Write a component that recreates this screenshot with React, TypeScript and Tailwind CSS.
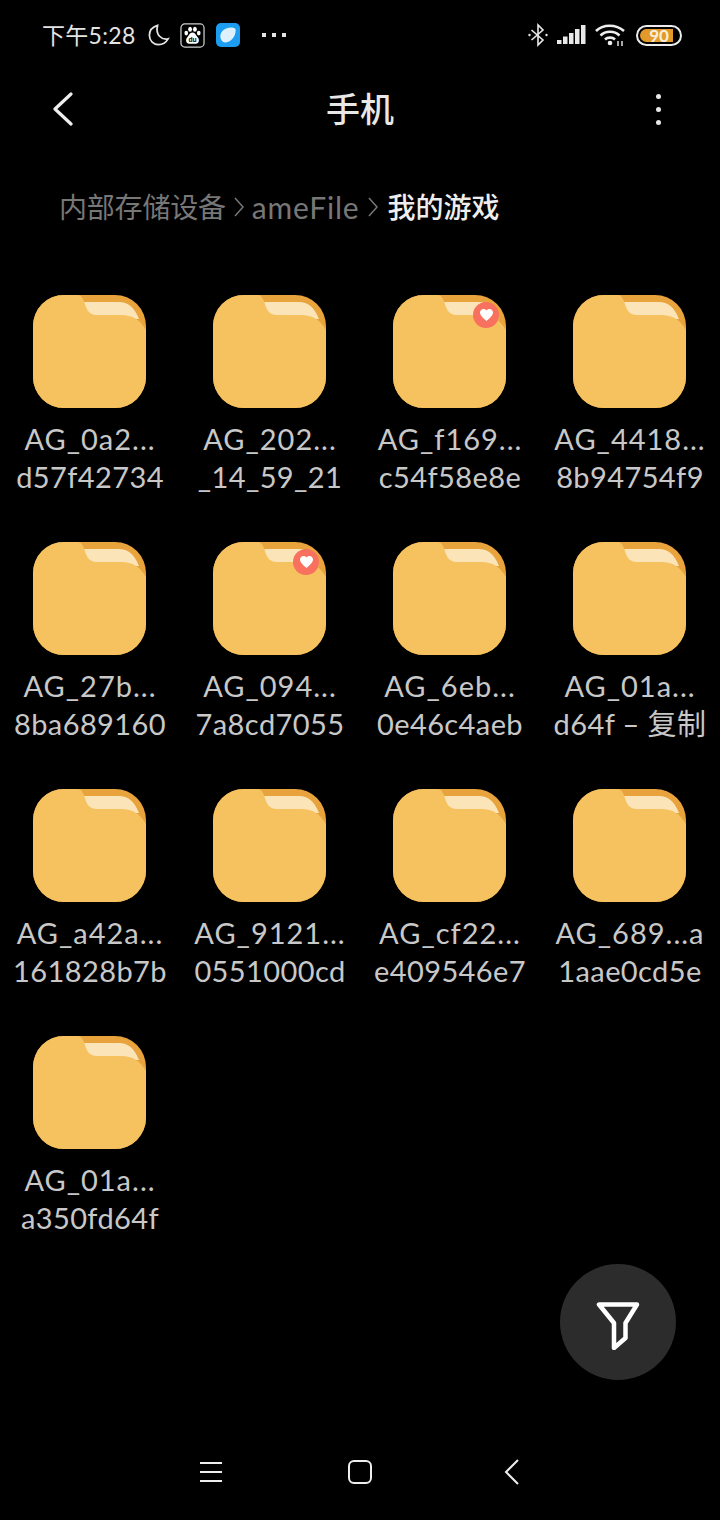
const FONT = "font-['Lato','Noto_Sans_CJK_SC',sans-serif]";

type Item = { top: string; bottom: string; liked?: boolean };

const items: Item[] = [
  { top: "AG_0a2...", bottom: "d57f42734" },
  { top: "AG_202...", bottom: "_14_59_21" },
  { top: "AG_f169...", bottom: "c54f58e8e", liked: true },
  { top: "AG_4418...", bottom: "8b94754f9" },
  { top: "AG_27b...", bottom: "8ba689160" },
  { top: "AG_094...", bottom: "7a8cd7055", liked: true },
  { top: "AG_6eb...", bottom: "0e46c4aeb" },
  { top: "AG_01a...", bottom: "d64f – 复制" },
  { top: "AG_a42a...", bottom: "161828b7b" },
  { top: "AG_9121...", bottom: "0551000cd" },
  { top: "AG_cf22...", bottom: "e409546e7" },
  { top: "AG_689...a", bottom: "1aae0cd5e" },
  { top: "AG_01a...", bottom: "a350fd64f" },
];

function FolderIcon({ liked, id }: { liked?: boolean; id: number }) {
  return (
    <div className="relative w-[113px] h-[113px] self-start ml-[33px]">
      <svg width="113" height="113" viewBox="0 0 113 113">
        <defs>
          <clipPath id={`folder-${id}`}>
            <rect width="113" height="113" rx="31" />
          </clipPath>
        </defs>
        <g clipPath={`url(#folder-${id})`}>
          <rect width="113" height="113" fill="#E8A33D" />
          <path d="M44 7H86C95 7 101 12 106 24H44Z" fill="#FBE4B8" />
          <path
            d="M0 0H44C48 0 49 2 51 6C53 13 55 20 64 20H88C100 20 107 25 113 35V113H0Z"
            fill="#F5C25F"
          />
        </g>
      </svg>
      {liked && (
        <div className="absolute right-[7px] top-[7px] w-[26px] h-[26px] rounded-full bg-[#F8705E] flex items-center justify-center">
          <svg width="13" height="12" viewBox="0 0 24 22" fill="#ffffff">
            <path d="M12 22C5 16 0 12 0 6.500C0 2.800 2.800 0 6.500 0C8.700 0 10.800 1 12 2.800C13.200 1 15.300 0 17.500 0C21.200 0 24 2.800 24 6.500C24 12 19 16 12 22Z" />
          </svg>
        </div>
      )}
    </div>
  );
}

function StatusBar() {
  return (
    <div className="h-[70px] pl-[42px] pr-[38px] flex items-center justify-between">
      <div className="flex items-center">
        <span className="text-[23px] leading-none tracking-[0.3px] text-[#e4e4e4] w-[105px] whitespace-nowrap">下午5:28</span>
        <svg width="23" height="24" viewBox="0 0 24 24" fill="none" stroke="#e4e4e4" strokeWidth="1.800">
          <path d="M11 2C6 3.500 2.500 7.500 2.500 12.500C2.500 18 7 22 12 22C16.500 22 20 19.500 22 16C15.500 17.500 8.500 12 11 2Z" />
        </svg>
        <svg className="ml-[10px]" width="25" height="25" viewBox="0 0 26 26">
          <rect x="1" y="1" width="24" height="24" rx="4" fill="none" stroke="#cfcfcf" strokeWidth="1.300" />
          <ellipse cx="6.500" cy="10.500" rx="1.900" ry="2.500" fill="#fff" />
          <ellipse cx="10.500" cy="6.500" rx="2" ry="2.600" fill="#fff" />
          <ellipse cx="15.500" cy="6.500" rx="2" ry="2.600" fill="#fff" />
          <ellipse cx="19.500" cy="10.500" rx="1.900" ry="2.500" fill="#fff" />
          <path d="M13 10C10 10 9.500 13 7.500 15C5.500 17 6 21.500 9.500 21.500H16.500C20 21.500 20.500 17 18.500 15C16.500 13 16 10 13 10Z" fill="#fff" />
          <text x="13" y="20" textAnchor="middle" fontSize="7" fontWeight="700" fontFamily="Liberation Sans" fill="#000">du</text>
        </svg>
        <div className="ml-[11px] w-[24px] h-[24px] rounded-[5px] bg-[#1C9DF2] flex items-center justify-center">
          <svg width="20" height="20" viewBox="0 0 20 20">
            <path d="M2.500 13C1.500 8 5.500 3 12 2.500C14.500 2.300 16.500 2.800 17.500 4C18.500 10 14 17 7.500 17.500C5 17.500 3 15.500 2.500 13Z" fill="#DDF0FC" />
          </svg>
        </div>
        <div className="ml-[22px] flex gap-[6px]">
          <span className="w-[4px] h-[4px] bg-[#e4e4e4]" />
          <span className="w-[4px] h-[4px] bg-[#e4e4e4]" />
          <span className="w-[4px] h-[4px] bg-[#e4e4e4]" />
        </div>
      </div>
      <div className="flex items-center">
        <svg width="20" height="24" viewBox="0 0 20 24" fill="none" stroke="#e8e8e8" strokeWidth="1.600">
          <path d="M3.500 7L15 17L10 22V2L15 7L3.500 17" />
          <circle cx="1.500" cy="12" r="1.200" fill="#e8e8e8" stroke="none" />
          <circle cx="18.500" cy="12" r="1.200" fill="#e8e8e8" stroke="none" />
        </svg>
        <svg className="ml-[9px]" width="29" height="20" viewBox="0 0 29 20" fill="#e8e8e8">
          <rect x="0" y="15" width="4.500" height="4" />
          <rect x="6" y="11.500" width="4.500" height="7.500" />
          <rect x="12" y="8" width="4.500" height="11" />
          <rect x="18" y="4" width="4.500" height="15" />
          <rect x="24" y="0" width="4.500" height="19" />
        </svg>
        <svg className="ml-[9px]" width="31" height="24" viewBox="0 0 31 24" fill="none" stroke="#eeeeee" strokeWidth="2.600">
          <path d="M1 8C8 1 21 1 29 8" />
          <path d="M5.500 12.500C10.500 7.500 19.500 7.500 24.500 12.500" />
          <path d="M10 16.500C12.500 14 17.500 14 20 16.500" />
          <circle cx="15" cy="20" r="2.300" fill="#eeeeee" stroke="none" />
          <path d="M23 18V23M27 23V18" strokeWidth="1.400" />
        </svg>
        <div className="ml-[10px] w-[46px] h-[21px] rounded-full border-[2.5px] border-[#ececec] p-[2px] relative">
          <div className="w-[88%] h-full rounded-l-full rounded-r-[5px] bg-[#E39A2B]" />
          <span className="absolute inset-0 flex items-center justify-center text-[17px] leading-none font-bold text-[#f6efdc]">90</span>
        </div>
      </div>
    </div>
  );
}

export default function App() {
  return (
    <div className={`relative w-[720px] h-[1520px] bg-black flex flex-col ${FONT}`}>
      <StatusBar />

      <div className="h-[78px] px-[52px] grid grid-cols-[1fr_auto_1fr] items-center">
        <svg className="justify-self-start" width="22" height="34" viewBox="0 0 22 34" fill="none" stroke="#eeeeee" strokeWidth="3.200" strokeLinecap="round" strokeLinejoin="round">
          <path d="M19 2L3 17L19 32" />
        </svg>
        <span className="text-[34px] leading-none font-medium text-[#e8e8e8]">手机</span>
        <div className="justify-self-end mr-[7px] flex flex-col gap-[8px]">
          <span className="w-[5px] h-[5px] rounded-full bg-[#e8e8e8]" />
          <span className="w-[5px] h-[5px] rounded-full bg-[#e8e8e8]" />
          <span className="w-[5px] h-[5px] rounded-full bg-[#e8e8e8]" />
        </div>
      </div>

      <div className="mt-[38px] pl-[59px] h-[42px] flex items-center text-[28px] leading-none text-[#777777] whitespace-nowrap">
        <span className="tracking-[-0.2px]">内部存储设备</span>
        <svg className="mx-[7px]" width="12" height="22" viewBox="0 0 12 22" fill="none" stroke="#777777" strokeWidth="1.500">
          <path d="M2 2L10 11L2 20" />
        </svg>
        <span className="text-[30px] tracking-[0.8px]">ameFile</span>
        <svg className="ml-[8px] mr-[8px]" width="12" height="22" viewBox="0 0 12 22" fill="none" stroke="#777777" strokeWidth="1.500">
          <path d="M2 2L10 11L2 20" />
        </svg>
        <span className="font-medium text-[#eeeeee]">我的游戏</span>
      </div>

      <div className="mt-[67px] grid grid-cols-4 gap-y-[46px]">
        {items.map((item, i) => (
          <div key={i} className="flex flex-col items-center">
            <FolderIcon liked={item.liked} id={i} />
            <div className="mt-[12px] text-center text-[29px] tracking-[0.4px] leading-[38px] text-[#c8c8c8] whitespace-nowrap">
              <div className="tracking-[1px]">{item.top}</div>
              <div>{item.bottom}</div>
            </div>
          </div>
        ))}
      </div>

      <button className="absolute left-[560px] top-[1264px] w-[116px] h-[116px] rounded-full bg-[#2c2c2c] flex items-center justify-center">
        <svg width="46" height="56" viewBox="0 0 46 56" fill="none" stroke="#ffffff" strokeWidth="4.500" strokeLinejoin="round">
          <path d="M4 10.500H42L30.500 29V44L19 54V29Z" />
        </svg>
      </button>

      <div className="mt-auto h-[96px] px-[200px] grid grid-cols-[1fr_auto_1fr] items-center">
        <div className="justify-self-start flex flex-col gap-[7px]">
          <span className="w-[22px] h-[2px] bg-[#eeeeee]" />
          <span className="w-[22px] h-[2px] bg-[#eeeeee]" />
          <span className="w-[22px] h-[2px] bg-[#eeeeee]" />
        </div>
        <div className="w-[24px] h-[24px] rounded-[6px] border-2 border-[#eeeeee]" />
        <svg className="justify-self-end" width="16" height="26" viewBox="0 0 16 26" fill="none" stroke="#eeeeee" strokeWidth="2">
          <path d="M14 1L2 13L14 25" />
        </svg>
      </div>
    </div>
  );
}
